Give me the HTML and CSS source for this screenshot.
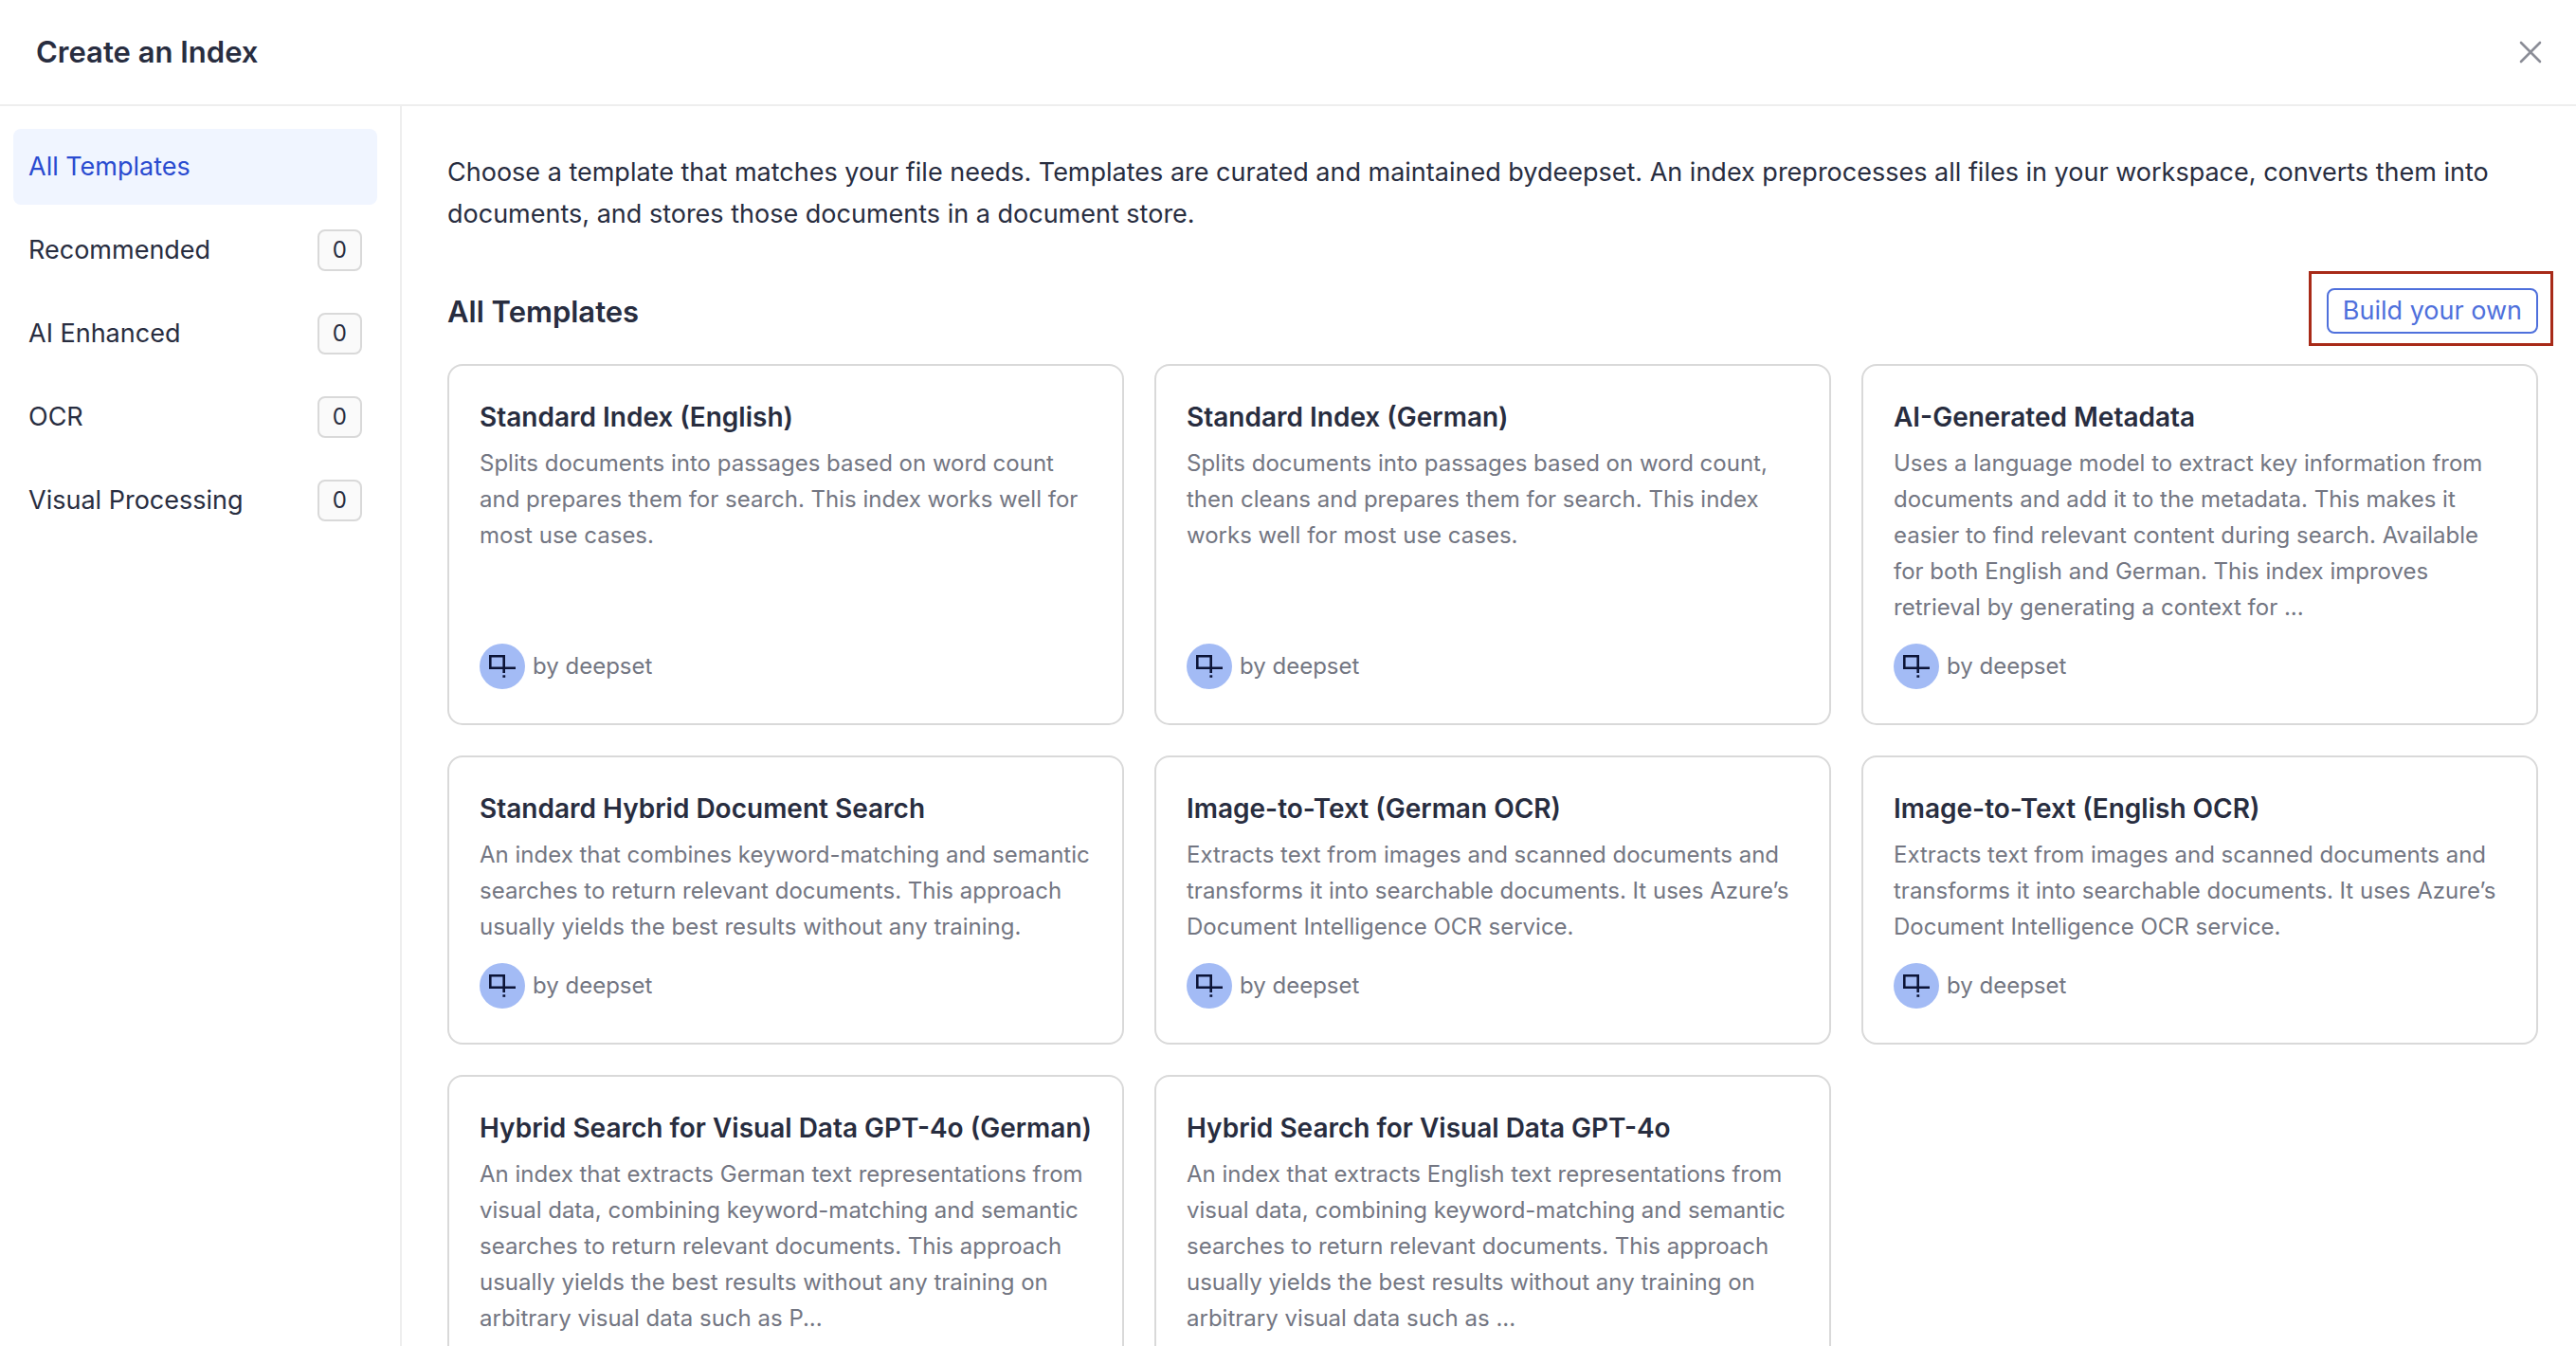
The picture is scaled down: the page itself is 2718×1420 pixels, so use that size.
FILE: index.html
```html
<!DOCTYPE html>
<html lang="en">
<head>
<meta charset="utf-8">
<title>Create an Index</title>
<link rel="stylesheet" href="styles.css">
</head>
<body>

<svg class="sprite" aria-hidden="true">
  <symbol id="deepset" viewBox="0 0 48 48">
    <circle cx="24" cy="24" r="24" fill="#a3bbf5"/>
    <path d="M11.3 13.3H25.7V25.8H11.3ZM25.7 25.8H38M25.7 25.8V31" fill="none" stroke="#0c1437" stroke-width="2.6"/>
    <path d="M24.4 33.3h2.8v2.5h-2.8z" fill="#0c1437"/>
  </symbol>
</svg>

<header class="header">
  <h1>Create an Index</h1>
  <button class="close" aria-label="Close">
    <svg width="24" height="24" viewBox="0 0 24 24"><path d="M2 2L22 22M22 2L2 22" stroke="#8b8d97" stroke-width="2.6" stroke-linecap="round"/></svg>
  </button>
</header>

<div class="layout">
  <nav class="sidebar">
    <a class="item active" href="#all">All Templates</a>
    <a class="item" href="#recommended">Recommended <span class="count">0</span></a>
    <a class="item" href="#ai">AI Enhanced <span class="count">0</span></a>
    <a class="item" href="#ocr">OCR <span class="count">0</span></a>
    <a class="item" href="#visual">Visual Processing <span class="count">0</span></a>
  </nav>

  <main class="content">
    <p class="intro">Choose a template that matches your file needs. Templates are curated and maintained bydeepset. An index preprocesses all files in your workspace, converts them into documents, and stores those documents in a document store.</p>

    <div class="toolbar">
      <h2>All Templates</h2>
      <div class="highlight"><button class="build">Build your own</button></div>
    </div>

    <div class="cards">
      <article class="card">
        <h3>Standard Index (English)</h3>
        <p>Splits documents into passages based on word count and prepares them for search. This index works well for most use cases.</p>
        <div class="author"><svg class="logo"><use href="#deepset"/></svg>by deepset</div>
      </article>
      <article class="card">
        <h3>Standard Index (German)</h3>
        <p>Splits documents into passages based on word count, then cleans and prepares them for search. This index works well for most use cases.</p>
        <div class="author"><svg class="logo"><use href="#deepset"/></svg>by deepset</div>
      </article>
      <article class="card">
        <h3>AI-Generated Metadata</h3>
        <p>Uses a language model to extract key information from documents and add it to the metadata. This makes it easier to find relevant content during search. Available for both English and German. This index improves retrieval by generating a context for ...</p>
        <div class="author"><svg class="logo"><use href="#deepset"/></svg>by deepset</div>
      </article>
      <article class="card">
        <h3>Standard Hybrid Document Search</h3>
        <p>An index that combines keyword-matching and semantic searches to return relevant documents. This approach usually yields the best results without any training.</p>
        <div class="author"><svg class="logo"><use href="#deepset"/></svg>by deepset</div>
      </article>
      <article class="card">
        <h3>Image-to-Text (German OCR)</h3>
        <p>Extracts text from images and scanned documents and transforms it into searchable documents. It uses Azure’s Document Intelligence OCR service.</p>
        <div class="author"><svg class="logo"><use href="#deepset"/></svg>by deepset</div>
      </article>
      <article class="card">
        <h3>Image-to-Text (English OCR)</h3>
        <p>Extracts text from images and scanned documents and transforms it into searchable documents. It uses Azure’s Document Intelligence OCR service.</p>
        <div class="author"><svg class="logo"><use href="#deepset"/></svg>by deepset</div>
      </article>
      <article class="card">
        <h3>Hybrid Search for Visual Data GPT-4o (German)</h3>
        <p>An index that extracts German text representations from visual data, combining keyword-matching and semantic searches to return relevant documents. This approach usually yields the best results without any training on arbitrary visual data such as P...</p>
        <div class="author"><svg class="logo"><use href="#deepset"/></svg>by deepset</div>
      </article>
      <article class="card">
        <h3>Hybrid Search for Visual Data GPT-4o</h3>
        <p>An index that extracts English text representations from visual data, combining keyword-matching and semantic searches to return relevant documents. This approach usually yields the best results without any training on arbitrary visual data such as ...</p>
        <div class="author"><svg class="logo"><use href="#deepset"/></svg>by deepset</div>
      </article>
    </div>
  </main>
</div>

</body>
</html>
```
FILE: styles.css
```css
* {
  box-sizing: border-box;
}

body {
  margin: 0;
  height: 100vh;
  display: flex;
  flex-direction: column;
  overflow: hidden;
  background: #fff;
  color: #282d3f;
  font-family: Inter, "Liberation Sans", sans-serif;
  font-size: 27px;
  line-height: 44px;
}

h1, h2, h3, p {
  margin: 0;
}

h1, h2 {
  font-size: 31px;
  font-weight: 600;
}

button {
  font: inherit;
  background: none;
  cursor: pointer;
}

.sprite {
  position: absolute;
  width: 0;
  height: 0;
}

.header {
  display: flex;
  flex: none;
  align-items: center;
  justify-content: space-between;
  padding: 33px 36px 33px 38px;
  border-bottom: 2px solid #eee;
}

.close {
  display: flex;
  padding: 0;
  border: 0;
}

.layout {
  display: flex;
  flex: 1;
  min-height: 0;
}

.sidebar {
  display: flex;
  flex: none;
  flex-direction: column;
  gap: 8px;
  width: 424px;
  padding: 24px 24px 24px 14px;
  border-right: 2px solid #eee;
}

.item {
  display: flex;
  align-items: center;
  justify-content: space-between;
  height: 80px;
  padding: 0 16px;
  border-radius: 8px;
  color: inherit;
  text-decoration: none;
}

.item.active {
  background: #f0f5ff;
  color: #2a4bd0;
}

.count {
  padding: 0 14px;
  border: 2px solid #d9d9d9;
  border-radius: 8px;
  background: #fafafa;
  font-size: 24px;
  line-height: 40px;
}

.content {
  flex: 1;
  min-width: 0;
  padding: 48px 40px 0 48px;
}

.toolbar {
  display: flex;
  align-items: flex-end;
  justify-content: space-between;
  margin: 38px 0 19px;
}

.toolbar h2 {
  padding-bottom: 14px;
}

/* red frame around the build button, reaches into the right padding */
.highlight {
  margin-right: -16px;
  padding: 15px 13px 10px 16px;
  border: 3px solid #a82a18;
}

.build {
  display: block;
  height: 48px;
  padding: 0 15px;
  border: 2px solid #4f70dc;
  border-radius: 8px;
  color: #4f70dc;
  line-height: 44px;
}

.cards {
  display: grid;
  grid-template-columns: repeat(3, 1fr);
  gap: 32px;
}

.card {
  display: flex;
  flex-direction: column;
  padding: 32px 32px 36px;
  border: 2px solid #d9d9d9;
  border-radius: 16px;
}

.card h3 {
  margin-bottom: 8px;
  font-size: 28px;
  font-weight: 600;
}

.card p {
  margin-bottom: 19px;
  color: #737682;
  font-size: 24px;
  line-height: 38px;
}

.author {
  display: flex;
  align-items: center;
  gap: 8px;
  margin-top: auto;
  color: #737682;
  font-size: 24px;
  line-height: 38px;
}

.logo {
  width: 48px;
  height: 48px;
}
```
